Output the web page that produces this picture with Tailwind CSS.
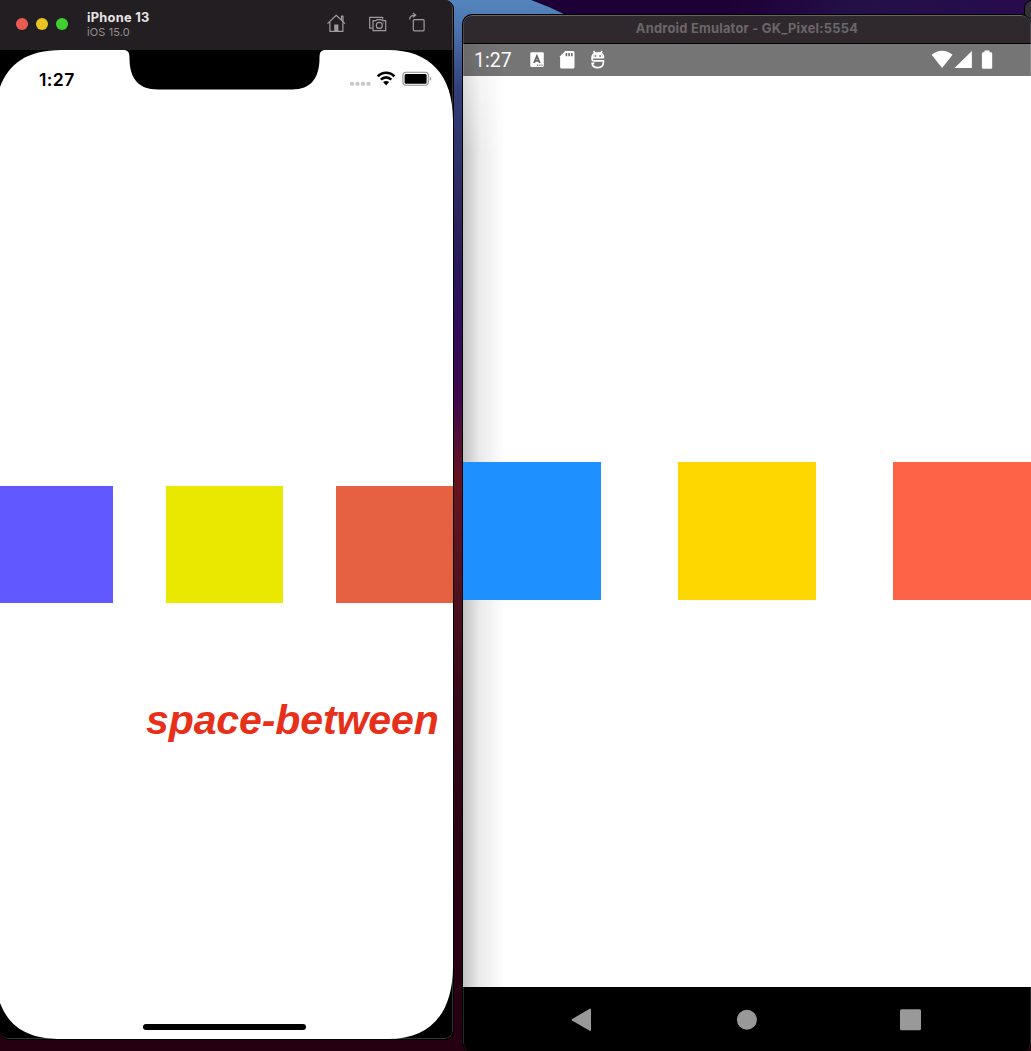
<!DOCTYPE html>
<html lang="en">
<head>
<meta charset="utf-8">
<title>space-between</title>
<script src="https://cdn.jsdelivr.net/npm/@tailwindcss/browser@4"></script>
</head>
<body class="relative flex h-[1051px] w-[1031px] items-start overflow-hidden bg-linear-[180deg,#5585bd_0,#4a73ad_30px,#333e78_90px,#2d2960_200px,#291a5a_260px,#300b59_330px,#40094c_400px,#65141d_480px,#50121d_580px,#3b0a19_680px,#2c0414_800px,#240010_1051px]">
  <!-- wallpaper ridge -->
  <svg class="absolute left-[440px] top-0" width="591" height="20" viewBox="0 0 591 20">
    <defs><linearGradient id="ridge"><stop offset="0" stop-color="#1d0036"/><stop offset=".4" stop-color="#1d0036"/><stop offset=".65" stop-color="#241047"/><stop offset="1" stop-color="#270b4d"/></linearGradient></defs>
    <path d="M91 0Q108 6 126 15V20H591V0Z" fill="url(#ridge)"/>
  </svg>

  <!-- iOS simulator -->
  <section class="relative flex h-[1040px] w-[454px] shrink-0 flex-col overflow-hidden rounded-tr-[9px] rounded-b-[9px] border-r border-b border-black bg-black font-['Inter',sans-serif]">
    <header class="flex h-[50px] shrink-0 items-start bg-[#231e21]">
      <div class="flex gap-2 pt-[18px] pl-4">
        <i class="size-3 rounded-full bg-[#ea5c53]"></i><i class="size-3 rounded-full bg-[#eac423]"></i><i class="size-3 rounded-full bg-[#43d02f]"></i>
      </div>
      <div class="ml-[19px] flex-1 pt-[11px]">
        <h1 class="text-[12.8px] leading-[14px] font-bold tracking-[0.28px] text-[#e8e5e7]">iPhone 13</h1>
        <p class="text-[11px] leading-[14px] tracking-[0.1px] text-[#969194]">iOS 15.0</p>
      </div>
      <svg width="126" height="50" viewBox="327 0 126 50" fill="none" stroke="#a09a9d" stroke-width="1.2">
        <path d="M327.5 23.6 336.3 15.3 345 23.6M341.5 19.7V16.2H343V21.5M329.9 22V31.4H342.9V22" stroke-linejoin="round"/>
        <path d="M334.2 24.5H338.4V31.4H334.2Z" fill="#a09a9d" stroke="none"/>
        <path d="M372.5 28.2H369.7V17.4H382.7V19.6" stroke-linejoin="round"/>
        <path d="M373 20.6H376L377.2 19.7H381.4L382.4 20.6H385.7V30.7H373Z" stroke-linejoin="round"/>
        <circle cx="379.3" cy="25.4" r="3"/><circle cx="383.6" cy="22.9" r=".5" fill="#a09a9d" stroke="none"/>
        <rect x="413.3" y="19.6" width="10.8" height="11.2" rx="1"/>
        <path d="M409.7 19.6C409.7 16.6 411.4 15 415.3 15.1M412.9 12.9 415.7 15.1 412.9 17.3"/>
      </svg>
    </header>

    <main class="relative flex flex-1 flex-col">
      <svg class="absolute top-0 left-0" width="453" height="989" viewBox="0 50 453 989">
        <path fill="#fff" d="M0 87C9 64 26 50 62 50H123C128 50 129.5 52 129.5 58C129.5 78 138 89.5 158 89.5H292C311 89.5 319.5 78 319.5 58C319.5 52 321 50 326 50H388C430 50 453 75 453 120V966C453 1014 430 1039 388 1039H62C26 1039 9 1026 0 1003Z"/>
      </svg>
      <div class="relative flex h-[58px] items-center justify-between pl-[39px]">
        <span class="pt-px text-[17.6px] leading-none font-semibold tracking-[0.4px] text-black">1:27</span>
        <svg width="103" height="30" viewBox="350 64 103 30">
          <g fill="#c8c8c8"><rect x="350" y="81.8" width="4" height="4" rx="1.6"/><rect x="355.5" y="81.8" width="4" height="4" rx="1.6"/><rect x="361" y="81.8" width="4" height="4" rx="1.6"/><rect x="366.5" y="81.8" width="4" height="4" rx="1.6"/></g>
          <g fill="none" stroke="#000" stroke-width="2.7"><path d="M377.8 76.4C382.5 71.5 389.7 71.5 394.4 76.4M380.9 79.6C384 76.5 388.2 76.5 391.3 79.6"/></g>
          <path d="M383.1 82.1Q386.1 79.8 389.1 82.1L386.1 85.4Z"/>
          <rect x="402.9" y="72.3" width="25.4" height="13" rx="3.2" fill="none" stroke="#8e8e8e" stroke-width="1.1"/><rect x="404.6" y="74" width="22" height="9.7" rx="1.5"/><path d="M429.8 76.8Q431.4 77.2 431.4 78.8T429.8 80.8Z" fill="#999"/>
        </svg>
      </div>
      <div class="relative mt-[378px] -ml-1 flex justify-between">
        <div class="h-[117px] w-[117px] bg-[#6158ff]"></div>
        <div class="h-[117px] w-[117px] bg-[#ebe800]"></div>
        <div class="h-[117px] w-[117px] bg-[#e66042]"></div>
      </div>
      <p class="relative mt-[92px] pl-[146px] font-['Liberation_Sans',sans-serif] text-[41px] leading-[50px] font-bold tracking-[-0.1px] whitespace-nowrap text-[#e6301a] italic">space-between</p>
      <div class="relative mt-auto mb-[9px] ml-[143px] h-[6px] w-[163px] rounded-full bg-black"></div>
    </main>
    <div class="pointer-events-none absolute inset-0 rounded-tr-[8px] rounded-b-[8px] border-r border-b border-white/20 mask-[linear-gradient(#000_0_100px,transparent_120px_960px,#000_980px)]"></div>
  </section>

  <!-- window behind, peeking in at the corner -->
  <div class="absolute top-0 left-[1024px] h-7 w-4 rounded-l-[8px] border border-black bg-[#353035]"></div>

  <!-- Android emulator -->
  <section class="relative mt-[14px] ml-[8px] flex h-[1037px] w-[569px] shrink-0 flex-col overflow-hidden rounded-t-[10px] rounded-b-[8px] border-t border-l border-black bg-black">
    <header class="flex h-[29px] shrink-0 items-center justify-center rounded-t-[9px] border-t border-b border-t-[#686367] border-b-black bg-[#2f292d] pb-px font-['Inter',sans-serif] text-[12.9px] font-bold tracking-[0.22px] text-[#6b666a]"><h2>Android Emulator - GK_Pixel:5554</h2></header>
    <div class="flex h-8 shrink-0 items-center justify-between bg-[#757575] pl-[11px] text-white">
      <span class="w-[55px] pt-[2px] font-['Roboto',sans-serif] text-[19.5px] leading-none">1:27</span>
      <svg class="mr-auto" width="80" height="32" viewBox="529 44 80 32">
        <rect x="530.3" y="52.3" width="13.5" height="14.7" rx="1.3" fill="#fff"/>
        <path d="M534 63 536.9 56.2 539.8 63M535 60.9H538.8" fill="none" stroke="#666" stroke-width="1.9"/>
        <path d="M537 65.2h1.2m1 0h1.2m1 0h1.2" stroke="#707070" stroke-width="1.2"/>
        <path d="M565.3 51H573Q574.5 51 574.5 52.5V67Q574.5 68.5 573 68.5H561.6Q560.1 68.5 560.1 67V56.2Z" fill="#fff"/>
        <path d="M566.4 53V56.2M569.1 53V56.2M571.8 53V56.2" stroke="#686868" stroke-width="1.6"/>
        <path d="M592 58.2C592 55 593.9 52.8 597.8 52.8S603.6 55 603.6 57.6M593.6 51 595 53.4M602 51 600.6 53.4M603.9 57.8H592V58.5C592 60.2 592.5 60.9 594 60.9H603.4V62.3C603.4 65.8 601 67.6 597.8 67.6S592.3 65.9 592.1 63.4H594.3" fill="none" stroke="#fff" stroke-width="1.6"/>
        <path d="M593 57.8C593 54.5 595 53 597.8 53S602.8 54.5 602.8 57.8Z" fill="#fff"/>
        <path d="M594.6 56h1.7m3 0h1.7" stroke="#707070" stroke-width="1.5"/>
      </svg>
      <svg width="100" height="32" viewBox="931 44 100 32" fill="#fff">
        <path d="M931.6 54.7Q942 46.7 952.6 54.7L942.1 67.9Z"/><path d="M954.6 68 971.9 50.9V68Z"/><path d="M984.5 50.6H989.5V52.2H991Q992.2 52.2 992.2 53.4V67.6Q992.2 68.8 991 68.8H983.1Q981.9 68.8 981.9 67.6V53.4Q981.9 52.2 983.1 52.2H984.5Z"/>
      </svg>
    </div>
    <main class="h-[911px] shrink-0 bg-white pt-[386px]">
      <div class="relative z-10 flex justify-between">
        <div class="size-[138px] bg-[#1e90ff]"></div>
        <div class="size-[138px] bg-[#ffd700]"></div>
        <div class="size-[138px] bg-[#ff6347]"></div>
      </div>
    </main>
    <nav class="flex flex-1 items-center justify-center">
      <svg width="568" height="64" viewBox="463 987 568 64" fill="#999"><path d="M571.8 1019.2 589.7 1008.8Q591 1008.2 591 1009.5V1030Q591 1031.3 589.7 1030.7L572 1020.6Q571.2 1020 571.8 1019.2Z"/><circle cx="746.9" cy="1019.8" r="10"/><rect x="900" y="1009.2" width="21" height="21" rx="1.5"/></svg>
    </nav>
    <!-- shadow cast by the window on the left -->
    <div class="pointer-events-none absolute top-[29px] left-0 h-[944px] w-[42px] bg-linear-to-r from-black/24 via-black/8 via-40% to-transparent mask-[linear-gradient(rgb(0_0_0/.35),#000_110px)]"></div>
    <div class="pointer-events-none absolute inset-0 rounded-t-[9px] rounded-b-[8px] border-x border-white/15 mask-[linear-gradient(#000_0_60px,transparent_62px_972px,#000_973px)]"></div>
  </section>
</body>
</html>
